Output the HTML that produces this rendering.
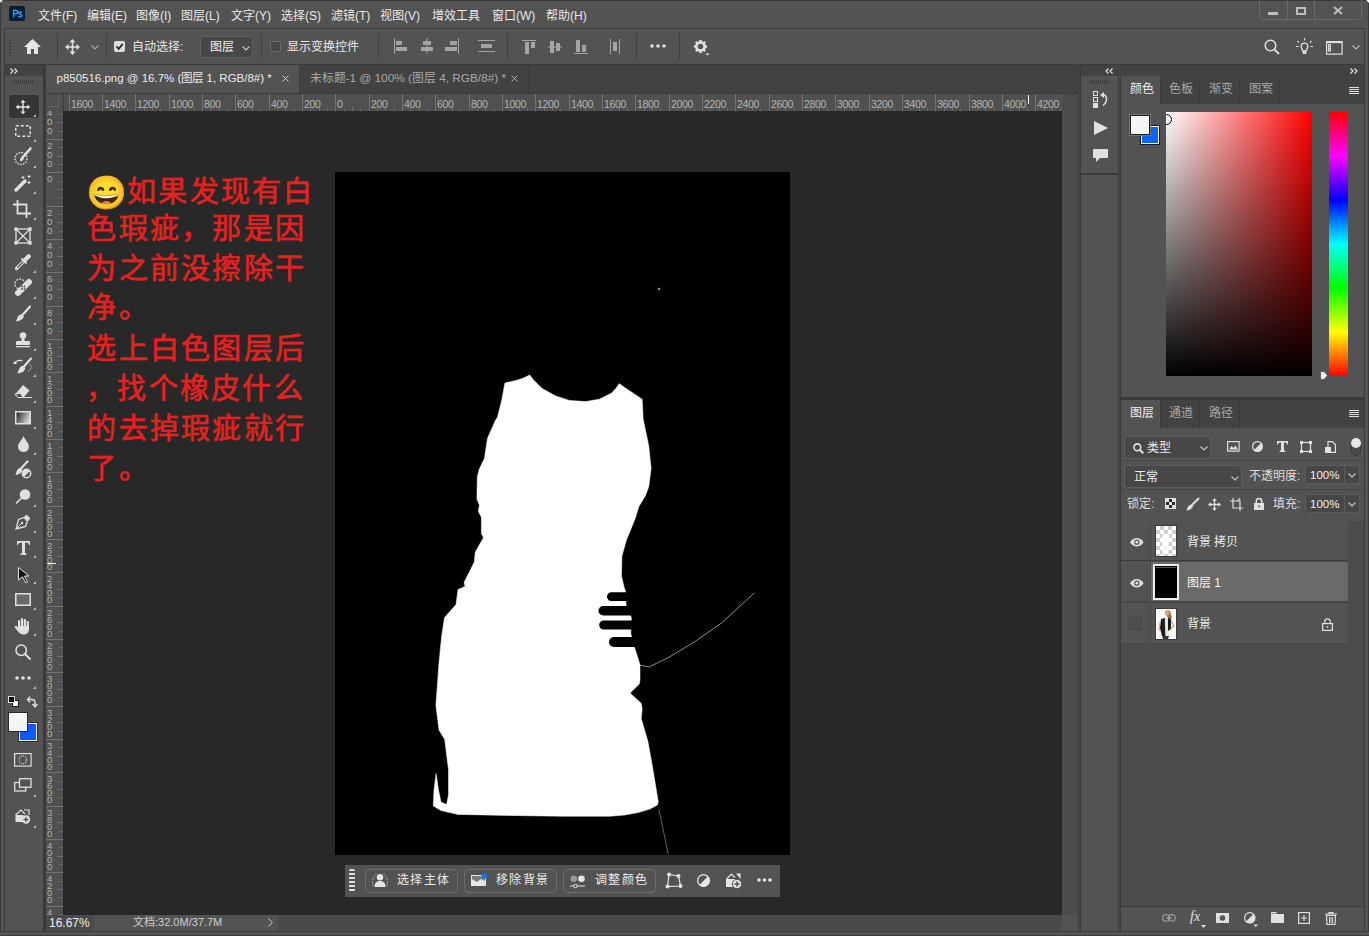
<!DOCTYPE html>
<html lang="zh-CN"><head><meta charset="utf-8">
<style>
*{box-sizing:border-box;margin:0;padding:0}
html,body{width:1369px;height:936px;overflow:hidden;background:#535353;font-family:"Liberation Sans",sans-serif;color:#d6d6d6;font-size:12px}
.a{position:absolute}
.t{position:absolute;white-space:nowrap;line-height:1}
svg{position:absolute;overflow:visible}
.sep{position:absolute;width:1px;background:#3f3f3f}
</style><style>
.rl{font-size:10.5px;color:#b4b4b4;letter-spacing:-0.3px}
.rt{font-size:29px;font-weight:500;color:#e8211f;-webkit-text-stroke:0.6px #e8211f;letter-spacing:2.3px}
.ct{font-size:12px;color:#ececec;letter-spacing:1.4px}
.pt{font-size:12px}
.nt{font-size:11.5px;color:#f0f0f0}
</style></head><body>
<!-- window frame -->
<div class="a" style="left:0;top:0;width:1369px;height:936px;background:#535353;border:1px solid #3a3a3a"></div>
<div class="a" style="left:0;top:931px;width:1369px;height:4px;background:#535353;border-top:1px solid #3a3a3a"></div>
<svg style="left:0;top:0" width="3" height="3"><path d="M0 0H3L0 3Z" fill="#fff"/></svg><svg style="left:1366px;top:0" width="3" height="3"><path d="M0 0H3V3Z" fill="#fff"/></svg>
<!-- menubar -->
<div class="a" style="left:9px;top:6px;width:16px;height:15px;background:#001e36;border-radius:2px"></div>
<svg style="left:0;top:0" width="30" height="30" fill="none" stroke="#31a8ff"><path d="M13.6 17.2V10.4H15.7C17 10.4 17.7 11.1 17.7 12.1C17.7 13.2 17 13.9 15.7 13.9H13.6" stroke-width="1.3"/><path d="M21.8 12.5C21.4 12.2 20.9 12 20.3 12C19.4 12 18.8 12.5 18.8 13.1C18.8 14.6 22 14 22 15.6C22 16.4 21.2 16.9 20.2 16.9C19.5 16.9 18.8 16.6 18.4 16.2" stroke-width="1.3"/></svg>
<div class="a" style="left:38px;top:9.5px;font-size:12px;color:#e8e8e8">
<span class="t" style="left:0">文件(F)</span><span class="t" style="left:49px">编辑(E)</span><span class="t" style="left:98px">图像(I)</span><span class="t" style="left:143px">图层(L)</span><span class="t" style="left:193px">文字(Y)</span><span class="t" style="left:243px">选择(S)</span><span class="t" style="left:293px">滤镜(T)</span><span class="t" style="left:342px">视图(V)</span><span class="t" style="left:394px">增效工具</span><span class="t" style="left:454px">窗口(W)</span><span class="t" style="left:508px">帮助(H)</span>
</div>
<!-- window controls -->
<div class="a" style="left:1259px;top:-2px;width:103px;height:22px;border:1px solid #686868;border-radius:0 0 4px 4px"></div>
<div class="a" style="left:1287px;top:0;width:1px;height:19px;background:#686868"></div>
<div class="a" style="left:1314px;top:0;width:1px;height:19px;background:#686868"></div>
<div class="a" style="left:1268px;top:12px;width:10px;height:3px;background:#bdbdbd"></div>
<div class="a" style="left:1296px;top:7px;width:10px;height:8px;border:2px solid #bdbdbd"></div>
<svg style="left:1333px;top:6px" width="10" height="9"><path d="M1 1L9 8M9 1L1 8" stroke="#bdbdbd" stroke-width="2"/></svg>

<!-- options bar -->
<div class="a" style="left:4px;top:28px;width:1361px;height:37px;background:#535353;border:1px solid #3a3a3a;border-bottom:none"></div>
<div class="a" style="left:9px;top:37px;width:2px;height:19px;background:repeating-linear-gradient(#3a3a3a 0 1px,transparent 1px 3px)"></div>
<svg style="left:24px;top:39px" width="17" height="16"><path d="M8.5 0L0 8H3V15H7V10H10V15H14V8H17Z" fill="#e6e6e6"/></svg>
<div class="sep" style="left:57px;top:34px;height:25px"></div>
<svg style="left:65px;top:39px" width="15" height="16"><path d="M7.5 1V15M1 8H14" stroke="#e0e0e0" stroke-width="1.6"/><path d="M7.5 0L4.5 3.5H10.5ZM7.5 16L4.5 12.5H10.5ZM0 8L3.5 5V11ZM15 8L11.5 5V11Z" fill="#e0e0e0"/></svg>
<svg style="left:91px;top:45px" width="8" height="5"><path d="M0.5 0.5L4 4L7.5 0.5" stroke="#a8a8a8" stroke-width="1.2" fill="none"/></svg>
<div class="sep" style="left:106px;top:34px;height:25px"></div>
<div class="a" style="left:114px;top:41px;width:11px;height:11px;background:#dcdcdc;border-radius:2px"></div>
<svg style="left:114px;top:41px" width="11" height="11"><path d="M2.5 5.5L4.7 7.8L8.7 3" stroke="#222" stroke-width="1.8" fill="none"/></svg>
<div class="t" style="left:132px;top:41px;font-size:12px;color:#e8e8e8">自动选择:</div>
<div class="a" style="left:200px;top:36px;width:53px;height:22px;background:#474747;border:1px solid #5f5f5f;border-radius:3px"></div>
<div class="t" style="left:210px;top:41px;font-size:12px;color:#f0f0f0">图层</div>
<svg style="left:242px;top:46px" width="8" height="5"><path d="M0.5 0.5L4 4L7.5 0.5" stroke="#c8c8c8" stroke-width="1.2" fill="none"/></svg>
<div class="sep" style="left:261px;top:34px;height:25px"></div>
<div class="a" style="left:270px;top:41px;width:11px;height:11px;background:#474747;border:1px solid #6e6e6e;border-radius:2px"></div>
<div class="t" style="left:287px;top:41px;font-size:12px;color:#e8e8e8">显示变换控件</div>
<div class="sep" style="left:378px;top:34px;height:25px"></div>
<!-- align icons -->
<svg style="left:394px;top:38px" width="14" height="16" fill="#a4a4a4"><rect x="0" y="0" width="1" height="16"/><rect x="2" y="3" width="6" height="4"/><rect x="2" y="9" width="11" height="4"/></svg>
<svg style="left:421px;top:38px" width="12" height="16" fill="#a4a4a4"><rect x="5.5" y="0" width="1" height="16"/><rect x="2" y="3" width="8" height="4"/><rect x="0" y="9" width="12" height="4"/></svg>
<svg style="left:445px;top:38px" width="14" height="16" fill="#a4a4a4"><rect x="13" y="0" width="1" height="16"/><rect x="5" y="3" width="7" height="4"/><rect x="0" y="9" width="12" height="4"/></svg>
<svg style="left:478px;top:38px" width="17" height="16" fill="#a4a4a4"><rect x="0" y="2" width="17" height="1"/><rect x="3" y="6" width="11" height="4"/><rect x="0" y="13" width="17" height="1"/></svg>
<div class="sep" style="left:507px;top:34px;height:25px"></div>
<svg style="left:522px;top:40px" width="14" height="14" fill="#a4a4a4"><rect x="0" y="0" width="14" height="1"/><rect x="3" y="2" width="4" height="12"/><rect x="9" y="2" width="4" height="6"/></svg>
<svg style="left:548px;top:40px" width="14" height="14" fill="#a4a4a4"><rect x="0" y="6.5" width="14" height="1"/><rect x="2" y="1" width="4" height="12"/><rect x="8" y="3" width="4" height="8"/></svg>
<svg style="left:574px;top:40px" width="14" height="14" fill="#a4a4a4"><rect x="0" y="13" width="14" height="1"/><rect x="2" y="0" width="4" height="12"/><rect x="8" y="5" width="4" height="7"/></svg>
<svg style="left:610px;top:39px" width="10" height="15" fill="#a4a4a4"><rect x="0" y="0" width="1" height="15"/><rect x="3" y="3" width="4" height="9"/><rect x="9" y="0" width="1" height="15"/></svg>
<div class="sep" style="left:636px;top:34px;height:25px"></div>
<svg style="left:650px;top:44px" width="16" height="4" fill="#e0e0e0"><circle cx="2" cy="2" r="1.8"/><circle cx="8" cy="2" r="1.8"/><circle cx="14" cy="2" r="1.8"/></svg>
<div class="sep" style="left:679px;top:34px;height:25px"></div>
<svg style="left:694px;top:40px" width="16" height="16"><g fill="#e0e0e0"><rect x="5.3" y="-0.1" width="2.4" height="3" transform="rotate(0 6.5 6.5)"/><rect x="5.3" y="-0.1" width="2.4" height="3" transform="rotate(45 6.5 6.5)"/><rect x="5.3" y="-0.1" width="2.4" height="3" transform="rotate(90 6.5 6.5)"/><rect x="5.3" y="-0.1" width="2.4" height="3" transform="rotate(135 6.5 6.5)"/><rect x="5.3" y="-0.1" width="2.4" height="3" transform="rotate(180 6.5 6.5)"/><rect x="5.3" y="-0.1" width="2.4" height="3" transform="rotate(225 6.5 6.5)"/><rect x="5.3" y="-0.1" width="2.4" height="3" transform="rotate(270 6.5 6.5)"/><rect x="5.3" y="-0.1" width="2.4" height="3" transform="rotate(315 6.5 6.5)"/></g><circle cx="6.5" cy="6.5" r="4.1" fill="none" stroke="#e0e0e0" stroke-width="2.6"/><path d="M11.5 13.6H15.5L13.5 15.6Z" fill="#f0f0f0"/></svg>
<!-- right side options icons -->
<svg style="left:1264px;top:39px" width="16" height="16"><circle cx="6.5" cy="6.5" r="5.3" fill="none" stroke="#e0e0e0" stroke-width="1.5"/><path d="M10.3 10.3L15 15" stroke="#e0e0e0" stroke-width="1.9"/></svg>
<svg style="left:1296px;top:38px" width="17" height="17" fill="none" stroke="#e0e0e0" stroke-width="1.2"><path d="M8.5 0V2.5M1.5 3L3.2 4.7M15.5 3L13.8 4.7M0 8.5H2.5M14.5 8.5H17"/><path d="M5.2 8.5A3.3 3.3 0 1 1 11.8 8.5C11.8 10.5 10.3 11.2 10.3 13H6.7C6.7 11.2 5.2 10.5 5.2 8.5Z" stroke-width="1.3"/><rect x="6.7" y="13.5" width="3.6" height="2.5" fill="#e0e0e0" stroke="none"/></svg>
<svg style="left:1326px;top:41px" width="17" height="14"><rect x="0.6" y="0.6" width="15.5" height="12.5" fill="none" stroke="#e0e0e0" stroke-width="1.2"/><rect x="0.6" y="0.6" width="15.5" height="1.5" fill="#e0e0e0"/><rect x="2" y="3" width="3" height="7.5" fill="#e0e0e0"/><rect x="3" y="4" width="1" height="1" fill="#535353"/><rect x="3" y="6.2" width="1" height="1" fill="#535353"/><rect x="3" y="8.4" width="1" height="1" fill="#535353"/></svg>
<svg style="left:1352px;top:45px" width="8" height="5"><path d="M0.5 0.5L4 4L7.5 0.5" stroke="#bdbdbd" stroke-width="1.1" fill="none"/></svg>
<!-- left tools panel -->
<div class="a" style="left:4px;top:64px;width:41px;height:868px;background:#3a3a3a"></div>
<div class="a" style="left:5px;top:65px;width:38px;height:11px;background:#424242"></div>
<svg style="left:10px;top:68px" width="8" height="6" fill="none" stroke="#e6e6e6" stroke-width="1.2"><path d="M0.5 0.5L3 3L0.5 5.5M4.5 0.5L7 3L4.5 5.5"/></svg>
<div class="a" style="left:5px;top:76px;width:38px;height:855px;background:#535353"></div>
<div class="a" style="left:14px;top:80px;width:20px;height:4px;background:repeating-linear-gradient(90deg,#3c3c3c 0 1px,transparent 1px 2px)"></div>
<div class="a" style="left:8px;top:93.5px;width:31.5px;height:25px;background:#353535;border:1px solid #5a5a5a;border-radius:3.5px"></div>

<svg style="left:15px;top:99px" width="16" height="16"><path d="M8 2.5V13.5M2.5 8H13.5" stroke="#e6e6e6" stroke-width="1.4"/><path d="M8 0.8L5.4 3.6H10.6ZM8 15.2L5.4 12.4H10.6ZM0.8 8L3.6 5.4V10.6ZM15.2 8L12.4 5.4V10.6Z" fill="#e6e6e6"/></svg><svg style="left:33px;top:114px" width="3" height="3"><path d="M3 0V3H0Z" fill="#b8b8b8"/></svg>
<svg style="left:15px;top:125px" width="16" height="12"><rect x="0.75" y="0.75" width="14.5" height="10.5" fill="none" stroke="#e0e0e0" stroke-width="1.5" stroke-dasharray="3 2"/></svg><svg style="left:33px;top:139px" width="3" height="3"><path d="M3 0V3H0Z" fill="#b8b8b8"/></svg>
<svg style="left:14px;top:148px" width="18" height="18"><circle cx="7" cy="10.5" r="6" fill="none" stroke="#e0e0e0" stroke-width="1.4" stroke-dasharray="1.6 1.2"/><path d="M16.5 0.5L8.5 9.5" stroke="#e0e0e0" stroke-width="2.6" stroke-linecap="round"/><path d="M8.8 9.2C6.8 9 5.5 10.5 6.2 13.5C8 13 9.8 12 9.8 10.3Z" fill="#e0e0e0"/></svg><svg style="left:33px;top:165px" width="3" height="3"><path d="M3 0V3H0Z" fill="#b8b8b8"/></svg>
<svg style="left:14px;top:174px" width="18" height="18"><path d="M2 16L11 7" stroke="#e0e0e0" stroke-width="3.4" stroke-linecap="round"/><path d="M9 2V5M7.5 3.5H10.5M15 1V4M13.5 2.5H16.5M15 7V10M13.5 8.5H16.5" stroke="#e0e0e0" stroke-width="1.1"/></svg><svg style="left:33px;top:191px" width="3" height="3"><path d="M3 0V3H0Z" fill="#b8b8b8"/></svg>
<svg style="left:13px;top:200px" width="18" height="18" fill="none" stroke="#e0e0e0" stroke-width="1.8"><path d="M4.5 0V13.5H18M0 4.5H13.5V18"/></svg><svg style="left:33px;top:217px" width="3" height="3"><path d="M3 0V3H0Z" fill="#b8b8b8"/></svg>
<svg style="left:15px;top:228px" width="16" height="16" fill="none" stroke="#e0e0e0" stroke-width="1.3"><rect x="1" y="1" width="14" height="14"/><path d="M1 1L15 15M15 1L1 15"/><rect x="0" y="0" width="2" height="2" fill="#e0e0e0"/><rect x="14" y="0" width="2" height="2" fill="#e0e0e0"/><rect x="0" y="14" width="2" height="2" fill="#e0e0e0"/><rect x="14" y="14" width="2" height="2" fill="#e0e0e0"/></svg>
<svg style="left:15px;top:254px" width="16" height="16"><path d="M1.5 14.5L9 7" stroke="#e0e0e0" stroke-width="3.2" stroke-linecap="round"/><path d="M2.5 13.5L8.5 7.5" stroke="#535353" stroke-width="1.2"/><path d="M8 5L11 8L16 3C16 0 13 0 13 0Z" fill="#e0e0e0"/><path d="M6.5 4.5L11.5 9.5" stroke="#e0e0e0" stroke-width="1.8"/></svg><svg style="left:33px;top:270px" width="3" height="3"><path d="M3 0V3H0Z" fill="#b8b8b8"/></svg>
<svg style="left:14px;top:278px" width="18" height="18"><circle cx="6" cy="6" r="5" fill="none" stroke="#e0e0e0" stroke-width="1.3" stroke-dasharray="1.8 1.4"/><path d="M4 15L15 4" stroke="#e0e0e0" stroke-width="6" stroke-linecap="round"/><circle cx="8" cy="11" r="0.9" fill="#535353"/><circle cx="10.5" cy="8.5" r="0.9" fill="#535353"/><circle cx="8" cy="8.5" r="0.9" fill="#535353"/><circle cx="10.5" cy="11" r="0.9" fill="#535353"/></svg><svg style="left:33px;top:296px" width="3" height="3"><path d="M3 0V3H0Z" fill="#b8b8b8"/></svg>
<svg style="left:15px;top:306px" width="16" height="16"><path d="M15 0.5L7.5 9" stroke="#e0e0e0" stroke-width="2.2" stroke-linecap="round"/><path d="M7 8.5C4 8 2.5 10.5 1 15.5C4.5 15 8.5 13.5 8.8 10.3Z" fill="#e0e0e0"/></svg><svg style="left:33px;top:322px" width="3" height="3"><path d="M3 0V3H0Z" fill="#b8b8b8"/></svg>
<svg style="left:15px;top:332px" width="16" height="16" fill="#e0e0e0"><circle cx="8" cy="3.5" r="3.3"/><rect x="6.5" y="5" width="3" height="4"/><rect x="1" y="9" width="14" height="4" rx="1"/><rect x="1" y="14" width="14" height="1.3"/></svg><svg style="left:33px;top:348px" width="3" height="3"><path d="M3 0V3H0Z" fill="#b8b8b8"/></svg>
<svg style="left:13px;top:358px" width="20" height="16"><path d="M18 0.5L11 8.5" stroke="#e0e0e0" stroke-width="2.2" stroke-linecap="round"/><path d="M10.5 8C7.5 7.5 6 10 4.5 15.5C8 15 12 13.5 12.3 10Z" fill="#e0e0e0"/><path d="M1.5 5.5C3 2.5 7 1.5 9.5 3" fill="none" stroke="#e0e0e0" stroke-width="1.2"/><path d="M0 6L4 6L2 3Z" fill="#e0e0e0"/><path d="M17 6C19 8.5 18 12 15 13.5" fill="none" stroke="#e0e0e0" stroke-width="1" stroke-dasharray="1 1"/></svg><svg style="left:33px;top:374px" width="3" height="3"><path d="M3 0V3H0Z" fill="#b8b8b8"/></svg>
<svg style="left:14px;top:384px" width="18" height="16"><path d="M9 1L15.5 6.5L9.5 13.5H4L1 10.5Z" fill="#e0e0e0"/><path d="M1 10.5L4 13.5H9.5L6 9Z" fill="#535353" stroke="#e0e0e0" stroke-width="1"/><path d="M9.5 13.5H18" stroke="#e0e0e0" stroke-width="1"/></svg><svg style="left:33px;top:400px" width="3" height="3"><path d="M3 0V3H0Z" fill="#b8b8b8"/></svg>
<svg style="left:15px;top:411px" width="16" height="14"><defs><linearGradient id="gr" x1="0" y1="0" x2="1" y2="0.4"><stop offset="0" stop-color="#1a1a1a"/><stop offset="1" stop-color="#d0d0d0"/></linearGradient></defs><rect x="0.75" y="0.75" width="14.5" height="12" fill="url(#gr)" stroke="#e0e0e0" stroke-width="1.5"/></svg><svg style="left:33px;top:426px" width="3" height="3"><path d="M3 0V3H0Z" fill="#b8b8b8"/></svg>
<svg style="left:18px;top:436px" width="11" height="16"><path d="M5.5 0C4 4 0 7 0 10.5A5.5 5.5 0 0 0 11 10.5C11 7 7 4 5.5 0Z" fill="#e0e0e0"/></svg><svg style="left:33px;top:452px" width="3" height="3"><path d="M3 0V3H0Z" fill="#b8b8b8"/></svg>
<svg style="left:15px;top:461px" width="16" height="18"><path d="M12.5 0.5L6 7.5" stroke="#e0e0e0" stroke-width="2.2" stroke-linecap="round"/><path d="M5.5 7C3 7 1.5 9.5 0.5 14C3.5 13.5 7 12 7.2 9Z" fill="#e0e0e0"/><circle cx="11.5" cy="12.5" r="4.2" fill="#535353" stroke="#e0e0e0" stroke-width="1.4"/><path d="M8.5 15.5L14.5 9.5" stroke="#e0e0e0" stroke-width="1.3"/><path d="M11.5 8.3A4.2 4.2 0 0 1 14.5 9.5L8.5 15.5A4.2 4.2 0 0 1 11.5 8.3Z" fill="#e0e0e0"/></svg>
<svg style="left:15px;top:489px" width="16" height="16"><circle cx="10" cy="5.5" r="5.3" fill="#e0e0e0"/><path d="M6.5 9L1 14.5" stroke="#e0e0e0" stroke-width="1.6"/></svg><svg style="left:33px;top:504px" width="3" height="3"><path d="M3 0V3H0Z" fill="#b8b8b8"/></svg>
<svg style="left:15px;top:514px" width="16" height="16"><path d="M11.5 0.5L15.5 4.5L13 7L9 3Z" fill="#e0e0e0"/><path d="M9 3.5L12.5 7L10.5 12.5L1 15L3.5 5.5Z" fill="none" stroke="#e0e0e0" stroke-width="1.3"/><path d="M1 15L6.5 9.5" stroke="#e0e0e0" stroke-width="1"/><circle cx="7" cy="9" r="1.2" fill="#e0e0e0"/></svg><svg style="left:33px;top:530px" width="3" height="3"><path d="M3 0V3H0Z" fill="#b8b8b8"/></svg>
<svg style="left:17px;top:541px" width="13" height="14" fill="#e0e0e0"><path d="M0 0H13V4H12C11.5 2 11 1.8 8 1.8V12.2L9.5 12.5V14H3.5V12.5L5 12.2V1.8C2 1.8 1.5 2 1 4H0Z"/></svg><svg style="left:33px;top:555px" width="3" height="3"><path d="M3 0V3H0Z" fill="#b8b8b8"/></svg>
<svg style="left:18px;top:567px" width="12" height="16"><path d="M0.5 0.5L11 9H6.5L9.5 15L7.5 15.8L4.5 9.8L0.5 13Z" fill="#111" stroke="#e0e0e0" stroke-width="1"/></svg><svg style="left:33px;top:581px" width="3" height="3"><path d="M3 0V3H0Z" fill="#b8b8b8"/></svg>
<svg style="left:15px;top:593px" width="16" height="13"><rect x="0.75" y="0.75" width="14.5" height="11.5" fill="#6a6a6a" stroke="#e0e0e0" stroke-width="1.5"/></svg><svg style="left:33px;top:607px" width="3" height="3"><path d="M3 0V3H0Z" fill="#b8b8b8"/></svg>
<svg style="left:14px;top:618px" width="17" height="17" fill="#e0e0e0"><rect x="4" y="2" width="2.2" height="9" rx="1.1"/><rect x="6.9" y="0" width="2.2" height="10" rx="1.1"/><rect x="9.8" y="1" width="2.2" height="10" rx="1.1"/><rect x="12.7" y="3" width="2.2" height="9" rx="1.1"/><path d="M4 8H15V11C15 14.5 13 16.5 9.5 16.5C7 16.5 5.5 15.5 4 13.5L0.5 9C1 8 2 7.8 3 8.5L4 9.5Z"/></svg><svg style="left:33px;top:633px" width="3" height="3"><path d="M3 0V3H0Z" fill="#b8b8b8"/></svg>
<svg style="left:15px;top:644px" width="16" height="16"><circle cx="6.2" cy="6.2" r="5.2" fill="none" stroke="#e0e0e0" stroke-width="1.5"/><path d="M10 10L15.5 15.5" stroke="#e0e0e0" stroke-width="2"/></svg>
<svg style="left:15px;top:676px" width="16" height="4" fill="#e0e0e0"><circle cx="2" cy="2" r="1.8"/><circle cx="8" cy="2" r="1.8"/><circle cx="14" cy="2" r="1.8"/></svg><svg style="left:33px;top:686px" width="3" height="3"><path d="M3 0V3H0Z" fill="#b8b8b8"/></svg>
<div class="a" style="left:12px;top:700px;width:7px;height:7px;background:#fff;border:1px solid #1a1a1a"></div><div class="a" style="left:8px;top:696px;width:7px;height:7px;background:#000;border:1px solid #ddd"></div>
<svg style="left:27px;top:696px" width="11" height="12" fill="none" stroke="#e0e0e0" stroke-width="1.4"><path d="M1 3.5H5C7.5 3.5 8 4.5 8 7V10"/><path d="M3 0.8L0.5 3.5L3 6.2M5.5 8L8 10.8L10.5 8" /></svg>
<div class="a" style="left:18px;top:722px;width:20px;height:20px;background:#0d5bff;border:1px solid #2a2a2a;box-shadow:inset 0 0 0 1px #f0f0f0"></div><div class="a" style="left:8px;top:712px;width:20px;height:20px;background:#f5f5f5;border:1px solid #2a2a2a"></div>
<svg style="left:14px;top:753px" width="18" height="14"><rect x="0.6" y="0.6" width="16.5" height="12.5" fill="none" stroke="#e0e0e0" stroke-width="1.2"/><circle cx="8.8" cy="6.8" r="3.8" fill="none" stroke="#e0e0e0" stroke-width="1.2" stroke-dasharray="1 1.2"/></svg>
<svg style="left:14px;top:778px" width="18" height="14" fill="#535353" stroke="#e0e0e0" stroke-width="1.3"><rect x="0.7" y="4.5" width="11" height="8.5"/><rect x="5.5" y="0.7" width="11.5" height="8.5"/></svg><svg style="left:33px;top:794px" width="3" height="3"><path d="M3 0V3H0Z" fill="#b8b8b8"/></svg>
<svg style="left:15px;top:809px" width="16" height="15"><path d="M0.5 6L6 1L10 5" fill="none" stroke="#e0e0e0" stroke-width="1.2"/><rect x="0.5" y="6" width="8" height="7" fill="#e0e0e0"/><path d="M9 1H14V6" fill="none" stroke="#e0e0e0" stroke-width="1.2"/><circle cx="11" cy="10.5" r="4.2" fill="#e0e0e0"/><path d="M11 8V13M8.5 10.5H13.5" stroke="#535353" stroke-width="1.3"/></svg><svg style="left:33px;top:825px" width="3" height="3"><path d="M3 0V3H0Z" fill="#b8b8b8"/></svg><div class="a" style="left:45px;top:64px;width:1034px;height:868px;background:#3a3a3a"></div>
<div class="a" style="left:46px;top:65px;width:1032px;height:28px;background:#424242"></div>
<div class="a" style="left:46px;top:65px;width:253px;height:28px;background:#535353"></div>
<div class="a" style="left:528px;top:65px;width:1px;height:28px;background:#3a3a3a"></div>
<div class="t" id="tab1" style="left:56.5px;top:73px;font-size:11.5px;color:#ececec">p850516.png @ 16.7% (图层 1, RGB/8#) *</div>
<svg style="left:282px;top:75px" width="7" height="7"><path d="M0.5 0.5L6.5 6.5M6.5 0.5L0.5 6.5" stroke="#cfcfcf" stroke-width="1"/></svg>
<div class="t" id="tab2" style="left:309.5px;top:73px;font-size:11.8px;color:#a9a9a9">未标题-1 @ 100% (图层 4, RGB/8#) *</div>
<svg style="left:511px;top:75px" width="7" height="7"><path d="M0.5 0.5L6.5 6.5M6.5 0.5L0.5 6.5" stroke="#b0b0b0" stroke-width="1"/></svg>
<div class="a" style="left:46px;top:94px;width:1016px;height:17px;background:#505050"></div>
<div class="a" style="left:46px;top:111px;width:17px;height:804px;background:#505050"></div>
<div class="a" style="left:58px;top:94px;width:1px;height:14px;background:repeating-linear-gradient(#747474 0 1px,transparent 1px 2px)"></div>
<div class="a" style="left:46px;top:106px;width:14px;height:1px;background:repeating-linear-gradient(90deg,#747474 0 1px,transparent 1px 2px)"></div>
<div class="a" style="left:63px;top:94px;width:1px;height:17px;background:#3c3c3c"></div>
<svg style="left:0;top:0" width="1369" height="936"><path d="M69.5 94V111 M102.5 94V111 M135.5 94V111 M169.5 94V111 M202.5 94V111 M235.5 94V111 M269.5 94V111 M302.5 94V111 M335.5 94V111 M369.5 94V111 M402.5 94V111 M435.5 94V111 M469.5 94V111 M502.5 94V111 M535.5 94V111 M569.5 94V111 M602.5 94V111 M635.5 94V111 M669.5 94V111 M702.5 94V111 M735.5 94V111 M769.5 94V111 M802.5 94V111 M835.5 94V111 M869.5 94V111 M902.5 94V111 M935.5 94V111 M969.5 94V111 M1002.5 94V111 M1035.5 94V111 M46 139.5H63 M46 172.5H63 M46 206.5H63 M46 239.5H63 M46 272.5H63 M46 306.5H63 M46 339.5H63 M46 372.5H63 M46 406.5H63 M46 439.5H63 M46 472.5H63 M46 506.5H63 M46 539.5H63 M46 572.5H63 M46 606.5H63 M46 639.5H63 M46 672.5H63 M46 706.5H63 M46 739.5H63 M46 772.5H63 M46 806.5H63 M46 839.5H63 M46 872.5H63 M46 906.5H63" stroke="#747474" stroke-width="1"/><path d="M77.5 108V111 M85.5 107V111 M94.5 108V111 M110.5 108V111 M119.5 107V111 M127.5 108V111 M144.5 108V111 M152.5 107V111 M160.5 108V111 M177.5 108V111 M185.5 107V111 M194.5 108V111 M210.5 108V111 M219.5 107V111 M227.5 108V111 M244.5 108V111 M252.5 107V111 M260.5 108V111 M277.5 108V111 M285.5 107V111 M294.5 108V111 M310.5 108V111 M319.5 107V111 M327.5 108V111 M344.5 108V111 M352.5 107V111 M360.5 108V111 M377.5 108V111 M385.5 107V111 M394.5 108V111 M410.5 108V111 M419.5 107V111 M427.5 108V111 M444.5 108V111 M452.5 107V111 M460.5 108V111 M477.5 108V111 M485.5 107V111 M494.5 108V111 M510.5 108V111 M519.5 107V111 M527.5 108V111 M544.5 108V111 M552.5 107V111 M560.5 108V111 M577.5 108V111 M585.5 107V111 M594.5 108V111 M610.5 108V111 M619.5 107V111 M627.5 108V111 M644.5 108V111 M652.5 107V111 M660.5 108V111 M677.5 108V111 M685.5 107V111 M694.5 108V111 M710.5 108V111 M719.5 107V111 M727.5 108V111 M744.5 108V111 M752.5 107V111 M760.5 108V111 M777.5 108V111 M785.5 107V111 M794.5 108V111 M810.5 108V111 M819.5 107V111 M827.5 108V111 M844.5 108V111 M852.5 107V111 M860.5 108V111 M877.5 108V111 M885.5 107V111 M894.5 108V111 M910.5 108V111 M919.5 107V111 M927.5 108V111 M944.5 108V111 M952.5 107V111 M960.5 108V111 M977.5 108V111 M985.5 107V111 M994.5 108V111 M1010.5 108V111 M1019.5 107V111 M1027.5 108V111 M1044.5 108V111 M1052.5 107V111 M1060.5 108V111 M59 114.5H63 M57 122.5H63 M59 131.5H63 M59 147.5H63 M57 156.5H63 M59 164.5H63 M59 181.5H63 M57 189.5H63 M59 197.5H63 M59 214.5H63 M57 222.5H63 M59 231.5H63 M59 247.5H63 M57 256.5H63 M59 264.5H63 M59 281.5H63 M57 289.5H63 M59 297.5H63 M59 314.5H63 M57 322.5H63 M59 331.5H63 M59 347.5H63 M57 356.5H63 M59 364.5H63 M59 381.5H63 M57 389.5H63 M59 397.5H63 M59 414.5H63 M57 422.5H63 M59 431.5H63 M59 447.5H63 M57 456.5H63 M59 464.5H63 M59 481.5H63 M57 489.5H63 M59 497.5H63 M59 514.5H63 M57 522.5H63 M59 531.5H63 M59 547.5H63 M57 556.5H63 M59 564.5H63 M59 581.5H63 M57 589.5H63 M59 597.5H63 M59 614.5H63 M57 622.5H63 M59 631.5H63 M59 647.5H63 M57 656.5H63 M59 664.5H63 M59 681.5H63 M57 689.5H63 M59 697.5H63 M59 714.5H63 M57 722.5H63 M59 731.5H63 M59 747.5H63 M57 756.5H63 M59 764.5H63 M59 781.5H63 M57 789.5H63 M59 797.5H63 M59 814.5H63 M57 822.5H63 M59 831.5H63 M59 847.5H63 M57 856.5H63 M59 864.5H63 M59 881.5H63 M57 889.5H63 M59 897.5H63 M59 914.5H63" stroke="#6c6c6c" stroke-width="1"/></svg>
<div class="t rl" style="left:71px;top:99px">1600</div>
<div class="t rl" style="left:104px;top:99px">1400</div>
<div class="t rl" style="left:137px;top:99px">1200</div>
<div class="t rl" style="left:171px;top:99px">1000</div>
<div class="t rl" style="left:204px;top:99px">800</div>
<div class="t rl" style="left:237px;top:99px">600</div>
<div class="t rl" style="left:271px;top:99px">400</div>
<div class="t rl" style="left:304px;top:99px">200</div>
<div class="t rl" style="left:337px;top:99px">0</div>
<div class="t rl" style="left:371px;top:99px">200</div>
<div class="t rl" style="left:404px;top:99px">400</div>
<div class="t rl" style="left:437px;top:99px">600</div>
<div class="t rl" style="left:471px;top:99px">800</div>
<div class="t rl" style="left:504px;top:99px">1000</div>
<div class="t rl" style="left:537px;top:99px">1200</div>
<div class="t rl" style="left:571px;top:99px">1400</div>
<div class="t rl" style="left:604px;top:99px">1600</div>
<div class="t rl" style="left:637px;top:99px">1800</div>
<div class="t rl" style="left:671px;top:99px">2000</div>
<div class="t rl" style="left:704px;top:99px">2200</div>
<div class="t rl" style="left:737px;top:99px">2400</div>
<div class="t rl" style="left:771px;top:99px">2600</div>
<div class="t rl" style="left:804px;top:99px">2800</div>
<div class="t rl" style="left:837px;top:99px">3000</div>
<div class="t rl" style="left:871px;top:99px">3200</div>
<div class="t rl" style="left:904px;top:99px">3400</div>
<div class="t rl" style="left:937px;top:99px">3600</div>
<div class="t rl" style="left:971px;top:99px">3800</div>
<div class="t rl" style="left:1004px;top:99px">4000</div>
<div class="t rl" style="left:1037px;top:99px">4200</div>
<div class="a" style="left:46px;top:111px;width:17px;height:804px;overflow:hidden"><div class="a" style="left:-46px;top:-111px;width:1369px;height:936px"><div class="t rl" style="left:47px;top:108px;font-size:9.5px;line-height:1">4</div><div class="t rl" style="left:47px;top:117px;font-size:9.5px;line-height:1">0</div><div class="t rl" style="left:47px;top:126px;font-size:9.5px;line-height:1">0</div><div class="t rl" style="left:47px;top:141px;font-size:9.5px;line-height:1">2</div><div class="t rl" style="left:47px;top:150px;font-size:9.5px;line-height:1">0</div><div class="t rl" style="left:47px;top:159px;font-size:9.5px;line-height:1">0</div><div class="t rl" style="left:47px;top:174px;font-size:9.5px;line-height:1">0</div><div class="t rl" style="left:47px;top:208px;font-size:9.5px;line-height:1">2</div><div class="t rl" style="left:47px;top:217px;font-size:9.5px;line-height:1">0</div><div class="t rl" style="left:47px;top:226px;font-size:9.5px;line-height:1">0</div><div class="t rl" style="left:47px;top:241px;font-size:9.5px;line-height:1">4</div><div class="t rl" style="left:47px;top:250px;font-size:9.5px;line-height:1">0</div><div class="t rl" style="left:47px;top:259px;font-size:9.5px;line-height:1">0</div><div class="t rl" style="left:47px;top:274px;font-size:9.5px;line-height:1">6</div><div class="t rl" style="left:47px;top:283px;font-size:9.5px;line-height:1">0</div><div class="t rl" style="left:47px;top:292px;font-size:9.5px;line-height:1">0</div><div class="t rl" style="left:47px;top:308px;font-size:9.5px;line-height:1">8</div><div class="t rl" style="left:47px;top:317px;font-size:9.5px;line-height:1">0</div><div class="t rl" style="left:47px;top:326px;font-size:9.5px;line-height:1">0</div><div class="t rl" style="left:47px;top:341px;font-size:9.5px;line-height:1">1</div><div class="t rl" style="left:47px;top:348px;font-size:9.5px;line-height:1">0</div><div class="t rl" style="left:47px;top:355px;font-size:9.5px;line-height:1">0</div><div class="t rl" style="left:47px;top:362px;font-size:9.5px;line-height:1">0</div><div class="t rl" style="left:47px;top:374px;font-size:9.5px;line-height:1">1</div><div class="t rl" style="left:47px;top:381px;font-size:9.5px;line-height:1">2</div><div class="t rl" style="left:47px;top:388px;font-size:9.5px;line-height:1">0</div><div class="t rl" style="left:47px;top:395px;font-size:9.5px;line-height:1">0</div><div class="t rl" style="left:47px;top:408px;font-size:9.5px;line-height:1">1</div><div class="t rl" style="left:47px;top:415px;font-size:9.5px;line-height:1">4</div><div class="t rl" style="left:47px;top:422px;font-size:9.5px;line-height:1">0</div><div class="t rl" style="left:47px;top:429px;font-size:9.5px;line-height:1">0</div><div class="t rl" style="left:47px;top:441px;font-size:9.5px;line-height:1">1</div><div class="t rl" style="left:47px;top:448px;font-size:9.5px;line-height:1">6</div><div class="t rl" style="left:47px;top:455px;font-size:9.5px;line-height:1">0</div><div class="t rl" style="left:47px;top:462px;font-size:9.5px;line-height:1">0</div><div class="t rl" style="left:47px;top:474px;font-size:9.5px;line-height:1">1</div><div class="t rl" style="left:47px;top:481px;font-size:9.5px;line-height:1">8</div><div class="t rl" style="left:47px;top:488px;font-size:9.5px;line-height:1">0</div><div class="t rl" style="left:47px;top:495px;font-size:9.5px;line-height:1">0</div><div class="t rl" style="left:47px;top:508px;font-size:9.5px;line-height:1">2</div><div class="t rl" style="left:47px;top:515px;font-size:9.5px;line-height:1">0</div><div class="t rl" style="left:47px;top:522px;font-size:9.5px;line-height:1">0</div><div class="t rl" style="left:47px;top:529px;font-size:9.5px;line-height:1">0</div><div class="t rl" style="left:47px;top:541px;font-size:9.5px;line-height:1">2</div><div class="t rl" style="left:47px;top:548px;font-size:9.5px;line-height:1">2</div><div class="t rl" style="left:47px;top:555px;font-size:9.5px;line-height:1">0</div><div class="t rl" style="left:47px;top:562px;font-size:9.5px;line-height:1">0</div><div class="t rl" style="left:47px;top:574px;font-size:9.5px;line-height:1">2</div><div class="t rl" style="left:47px;top:581px;font-size:9.5px;line-height:1">4</div><div class="t rl" style="left:47px;top:588px;font-size:9.5px;line-height:1">0</div><div class="t rl" style="left:47px;top:595px;font-size:9.5px;line-height:1">0</div><div class="t rl" style="left:47px;top:608px;font-size:9.5px;line-height:1">2</div><div class="t rl" style="left:47px;top:615px;font-size:9.5px;line-height:1">6</div><div class="t rl" style="left:47px;top:622px;font-size:9.5px;line-height:1">0</div><div class="t rl" style="left:47px;top:629px;font-size:9.5px;line-height:1">0</div><div class="t rl" style="left:47px;top:641px;font-size:9.5px;line-height:1">2</div><div class="t rl" style="left:47px;top:648px;font-size:9.5px;line-height:1">8</div><div class="t rl" style="left:47px;top:655px;font-size:9.5px;line-height:1">0</div><div class="t rl" style="left:47px;top:662px;font-size:9.5px;line-height:1">0</div><div class="t rl" style="left:47px;top:674px;font-size:9.5px;line-height:1">3</div><div class="t rl" style="left:47px;top:681px;font-size:9.5px;line-height:1">0</div><div class="t rl" style="left:47px;top:688px;font-size:9.5px;line-height:1">0</div><div class="t rl" style="left:47px;top:695px;font-size:9.5px;line-height:1">0</div><div class="t rl" style="left:47px;top:708px;font-size:9.5px;line-height:1">3</div><div class="t rl" style="left:47px;top:715px;font-size:9.5px;line-height:1">2</div><div class="t rl" style="left:47px;top:722px;font-size:9.5px;line-height:1">0</div><div class="t rl" style="left:47px;top:729px;font-size:9.5px;line-height:1">0</div><div class="t rl" style="left:47px;top:741px;font-size:9.5px;line-height:1">3</div><div class="t rl" style="left:47px;top:748px;font-size:9.5px;line-height:1">4</div><div class="t rl" style="left:47px;top:755px;font-size:9.5px;line-height:1">0</div><div class="t rl" style="left:47px;top:762px;font-size:9.5px;line-height:1">0</div><div class="t rl" style="left:47px;top:774px;font-size:9.5px;line-height:1">3</div><div class="t rl" style="left:47px;top:781px;font-size:9.5px;line-height:1">6</div><div class="t rl" style="left:47px;top:788px;font-size:9.5px;line-height:1">0</div><div class="t rl" style="left:47px;top:795px;font-size:9.5px;line-height:1">0</div><div class="t rl" style="left:47px;top:808px;font-size:9.5px;line-height:1">3</div><div class="t rl" style="left:47px;top:815px;font-size:9.5px;line-height:1">8</div><div class="t rl" style="left:47px;top:822px;font-size:9.5px;line-height:1">0</div><div class="t rl" style="left:47px;top:829px;font-size:9.5px;line-height:1">0</div><div class="t rl" style="left:47px;top:841px;font-size:9.5px;line-height:1">4</div><div class="t rl" style="left:47px;top:848px;font-size:9.5px;line-height:1">0</div><div class="t rl" style="left:47px;top:855px;font-size:9.5px;line-height:1">0</div><div class="t rl" style="left:47px;top:862px;font-size:9.5px;line-height:1">0</div><div class="t rl" style="left:47px;top:874px;font-size:9.5px;line-height:1">4</div><div class="t rl" style="left:47px;top:881px;font-size:9.5px;line-height:1">2</div><div class="t rl" style="left:47px;top:888px;font-size:9.5px;line-height:1">0</div><div class="t rl" style="left:47px;top:895px;font-size:9.5px;line-height:1">0</div><div class="t rl" style="left:47px;top:908px;font-size:9.5px;line-height:1">4</div></div></div>
<div class="a" style="left:1028px;top:95px;width:1px;height:9px;background:#f0f0f0"></div><div class="a" style="left:47px;top:563px;width:9px;height:1px;background:#f0f0f0"></div>
<div class="a" style="left:63px;top:111px;width:999px;height:804px;background:#282828"></div>
<div class="a" style="left:1062px;top:94px;width:16px;height:821px;background:#4c4c4c"></div>
<div class="a" style="left:46px;top:915px;width:1016px;height:16px;background:#4a4a4a"></div>
<div class="a" style="left:94px;top:915px;width:184px;height:16px;background:#535353"></div>
<div class="a" style="left:1062px;top:915px;width:16px;height:16px;background:#535353"></div>
<div class="t" style="left:49px;top:917px;font-size:12px;color:#ececec">16.67%</div>
<div class="t" style="left:133px;top:917px;font-size:11px;color:#d0d0d0">文档:32.0M/37.7M</div>
<svg style="left:268px;top:918px" width="5" height="9"><path d="M0.5 0.5L4.3 4.5L0.5 8.5" stroke="#cfcfcf" fill="none" stroke-width="1"/></svg><div class="a" style="left:335px;top:172px;width:455px;height:683px;background:#000"></div>
<svg style="left:335px;top:172px" width="455" height="683" viewBox="0 0 455 683"><path d="M194.8 202.9 L198.5 207.9 L207.2 216.6 L220.8 224.0 L234.5 228.4 L250.7 229.6 L264.3 227.2 L276.7 221.0 L281.7 215.4 L284.2 211.6 L290.4 216.0 L301.6 223.4 L307.2 227.2 L308.2 247.2 L313.8 274.1 L316.1 296.5 L313.8 314.5 L310.5 323.5 L303.8 334.7 L300.4 345.9 L291.4 368.3 L286.9 384.0 L286.5 404.2 L289.2 415.4 L290.5 419.0 L291.0 432.7 L296.4 445.8 L295.8 461.6 L299.7 476.0 L303.6 488.0 L305.0 493.0 L305.0 508.0 L304.3 512.0 L295.7 520.6 L295.8 521.8 L306.2 531.3 L307.2 537.0 L306.2 546.5 L312.9 569.3 L316.7 590.2 L320.5 613.0 L323.3 630.0 L322.4 632.9 L315.0 637.0 L303.4 640.5 L290.0 643.0 L274.9 644.3 L227.4 644.3 L172.4 643.4 L123.0 642.4 L106.0 638.6 L98.3 633.9 L99.0 618.0 L101.1 601.6 L103.5 618.0 L106.0 630.0 L111.6 632.5 L113.5 623.0 L113.5 609.0 L113.5 597.8 L109.7 567.4 L104.0 558.0 L100.9 533.6 L103.8 493.0 L106.6 464.4 L109.5 445.6 L121.0 432.6 L123.0 417.4 L130.1 414.4 L129.1 410.3 L134.2 400.2 L139.3 390.0 L140.3 379.9 L148.4 365.7 L146.4 361.6 L146.4 345.4 L143.3 339.3 L144.4 333.2 L141.9 327.1 L142.3 304.8 L144.4 296.7 L149.4 286.6 L152.5 266.3 L160.6 248.0 L162.5 245.2 L166.8 227.8 L169.9 211.0 L181.0 208.5 L188.5 206.0Z" fill="#fff" stroke="#fff" stroke-width="0.5" stroke-linejoin="round"/><path d="M310 420.20000000000005H276.4A4.40 4.40 0 0 0 276.4 429H310Z" fill="#000"/><path d="M310 434H268.2A4.75 4.75 0 0 0 268.2 443.5H310Z" fill="#000"/><path d="M310 448.5H268.7A4.50 4.50 0 0 0 268.7 457.5H310Z" fill="#000"/><path d="M310 465H279.0A5.00 5.00 0 0 0 279.0 475H310Z" fill="#000"/><path d="M305.0 493.2 L314.0 495.0 L333.9 485.3 L360.0 469.5 L386.5 451.0 L419.3 420.9" fill="none" stroke="#9a9a9a" stroke-width="0.9"/><path d="M323.9 637L333.29999999999995 682.4" stroke="#6a6a6a" stroke-width="0.9"/><circle cx="324" cy="117" r="1.3" fill="#8a8a8a"/></svg>
<div class="t rt" id="rt0" style="left:127px;top:178px">如果发现有白</div>
<div class="t rt" id="rt1" style="left:87.3px;top:214.5px">色瑕疵，那是因</div>
<div class="t rt" id="rt2" style="left:87.3px;top:254.5px">为之前没擦除干</div>
<div class="t rt" id="rt3" style="left:87.3px;top:293.8px">净。</div>
<div class="t rt" id="rt4" style="left:87.3px;top:335px">选上白色图层后</div>
<div class="t rt" id="rt5" style="left:86px;top:375px">，找个橡皮什么</div>
<div class="t rt" id="rt6" style="left:87.3px;top:414.5px">的去掉瑕疵就行</div>
<div class="t rt" id="rt7" style="left:87.3px;top:454.5px">了。</div>
<div class="t" id="emo" style="left:85.5px;top:175.5px;font-size:33px">😄</div>
<div class="a" style="left:345px;top:865px;width:435px;height:32px;background:#535353"></div>
<div class="a" style="left:349px;top:869px;width:6px;height:23px;background:repeating-linear-gradient(#e0e0e0 0 2px,transparent 2px 4px);border-radius:2px"></div>
<div class="a" style="left:365px;top:869px;width:93px;height:24px;border:1px solid #6e6e6e;border-radius:5px"></div>
<div class="a" style="left:464px;top:869px;width:93px;height:24px;border:1px solid #6e6e6e;border-radius:5px"></div>
<div class="a" style="left:563px;top:869px;width:93px;height:24px;border:1px solid #6e6e6e;border-radius:5px"></div>
<div class="t ct" style="left:397px;top:874px">选择主体</div>
<div class="t ct" style="left:496px;top:874px">移除背景</div>
<div class="t ct" style="left:595px;top:874px">调整颜色</div>
<svg style="left:372px;top:873px" width="16" height="14"><circle cx="8" cy="4.3" r="3.2" fill="#e6e6e6"/><path d="M2.5 14C2.5 9.5 5 8 8 8S13.5 9.5 13.5 14Z" fill="#e6e6e6"/><path d="M1 13C0 9 1 3 4.5 1M15 13C16 9 15 3 11.5 1" fill="none" stroke="#e6e6e6" stroke-width="0.8" stroke-dasharray="1 1"/></svg>
<svg style="left:471px;top:873px" width="17" height="14"><rect x="0" y="2" width="15" height="11" fill="#e6e6e6"/><path d="M1 3H14V8L10 6L6 9L1 6Z" fill="#7a7a7a"/><circle cx="13.5" cy="2.8" r="2.8" fill="#1473e6"/></svg>
<svg style="left:570px;top:875px" width="16" height="13"><circle cx="3.8" cy="3.8" r="3.3" fill="#9a9a9a"/><circle cx="11.5" cy="3.8" r="3.3" fill="#e6e6e6"/><path d="M0 11H15" stroke="#e6e6e6" stroke-width="1"/><circle cx="5.5" cy="11" r="1.8" fill="#535353" stroke="#e6e6e6" stroke-width="1"/></svg>
<svg style="left:666px;top:873px" width="16" height="15" fill="none" stroke="#e6e6e6" stroke-width="1.2"><path d="M3 1.5L12.5 3L14.5 13L1.5 13.5Z"/><circle cx="3" cy="1.5" r="1.4" fill="#e6e6e6"/><circle cx="12.5" cy="3" r="1.4" fill="#e6e6e6"/><circle cx="14.5" cy="13" r="1.4" fill="#e6e6e6"/><circle cx="1.5" cy="13.5" r="1.4" fill="#e6e6e6"/></svg>
<svg style="left:697px;top:874px" width="14" height="14"><circle cx="6.5" cy="6.5" r="5.8" fill="none" stroke="#e6e6e6" stroke-width="1.3"/><path d="M11 2.3A5.8 5.8 0 0 1 2.3 11Z" fill="#e6e6e6"/></svg>
<svg style="left:726px;top:873px" width="16" height="16"><path d="M0.5 6L5.5 1L9 4.5" fill="none" stroke="#e6e6e6" stroke-width="1.2"/><rect x="0" y="6" width="9" height="8" fill="#e6e6e6"/><path d="M10 0.5H14.5V6" fill="#e6e6e6"/><circle cx="11" cy="11" r="4.7" fill="#e6e6e6" stroke="#535353" stroke-width="1"/><path d="M11 8.3V13.7M8.3 11H13.7" stroke="#535353" stroke-width="1.4"/></svg>
<svg style="left:757px;top:878px" width="15" height="4" fill="#e6e6e6"><circle cx="2" cy="2" r="1.8"/><circle cx="7.5" cy="2" r="1.8"/><circle cx="13" cy="2" r="1.8"/></svg><div class="a" style="left:1078px;top:64px;width:287px;height:868px;background:#3a3a3a"></div>
<div class="a" style="left:1081px;top:65px;width:283px;height:11px;background:#424242"></div>
<svg style="left:1105px;top:68px" width="8" height="6" fill="none" stroke="#e0e0e0" stroke-width="1.2"><path d="M3.5 0.5L1 3L3.5 5.5M7.5 0.5L5 3L7.5 5.5"/></svg>
<svg style="left:1350px;top:68px" width="8" height="6" fill="none" stroke="#e0e0e0" stroke-width="1.2"><path d="M0.5 0.5L3 3L0.5 5.5M4.5 0.5L7 3L4.5 5.5"/></svg>
<div class="a" style="left:1081px;top:76px;width:37px;height:97px;background:#535353"></div>
<div class="a" style="left:1081px;top:175px;width:37px;height:756px;background:#535353"></div>
<div class="a" style="left:1090px;top:80px;width:19px;height:4px;background:repeating-linear-gradient(90deg,#3c3c3c 0 1px,transparent 1px 2px)"></div>
<svg style="left:1093px;top:91px" width="16" height="18"><rect x="0.5" y="0.5" width="4" height="4" fill="none" stroke="#e0e0e0" stroke-width="1"/><rect x="0.5" y="6.5" width="4" height="4" fill="none" stroke="#e0e0e0" stroke-width="1"/><rect x="0" y="12" width="5" height="5" fill="#e0e0e0"/><path d="M9.5 3.5C14 4 15.5 9.5 10 14.5" fill="none" stroke="#e0e0e0" stroke-width="1.5"/><path d="M7 4L11 1V7Z" fill="#e0e0e0"/></svg>
<svg style="left:1094px;top:121px" width="14" height="14"><path d="M0 0L14 7L0 14Z" fill="#e0e0e0"/></svg>
<svg style="left:1093px;top:149px" width="15" height="14"><path d="M1 0H14Q15 0 15 1V8Q15 9 14 9H7L3 13V9H1Q0 9 0 8V1Q0 0 1 0Z" fill="#e0e0e0"/></svg>
<div class="a" style="left:1121px;top:76px;width:243px;height:321px;background:#535353"></div>
<div class="a" style="left:1160px;top:76px;width:204px;height:28px;background:#424242"></div>
<div class="a" style="left:1199px;top:76px;width:1px;height:28px;background:#3a3a3a"></div>
<div class="a" style="left:1239px;top:76px;width:1px;height:28px;background:#3a3a3a"></div>
<div class="a" style="left:1279px;top:76px;width:1px;height:28px;background:#3a3a3a"></div>
<div class="a" style="left:1160px;top:76px;width:1px;height:28px;background:#3a3a3a"></div>
<div class="a" style="left:1121px;top:103px;width:243px;height:1px;background:transparent"></div>
<div class="t pt" style="left:1130px;top:83px;color:#f0f0f0">颜色</div>
<div class="t pt" style="left:1169px;top:83px;color:#a8a8a8">色板</div>
<div class="t pt" style="left:1209px;top:83px;color:#a8a8a8">渐变</div>
<div class="t pt" style="left:1249px;top:83px;color:#a8a8a8">图案</div>
<svg style="left:1349px;top:87px" width="10" height="7" fill="#e0e0e0"><rect y="0" width="10" height="1"/><rect y="2" width="10" height="1"/><rect y="4" width="10" height="1"/><rect y="6" width="10" height="1"/></svg>
<div class="a" style="left:1140px;top:125px;width:20px;height:20px;background:#0a64ff;border:1px solid #1a1a1a;box-shadow:inset 0 0 0 1px #f4f4f4"></div>
<div class="a" style="left:1129px;top:114px;width:22px;height:22px;background:#f5f5f5;border:1px solid #777;box-shadow:inset 0 0 0 1px #1e1e1e"></div>
<div class="a" style="left:1166px;top:112px;width:146px;height:264px;background:linear-gradient(to bottom,rgba(0,0,0,0),#000),linear-gradient(to right,#fff,#f00)"></div>
<div class="a" style="left:1166px;top:112px;width:10px;height:16px;overflow:hidden"><div class="a" style="left:-5px;top:2px;width:11px;height:11px;border:1.5px solid #000;border-radius:50%"></div></div>
<div class="a" style="left:1329px;top:112px;width:19px;height:264px;background:linear-gradient(to bottom,#f00 0%,#f0f 16.67%,#00f 33.33%,#0ff 50%,#0f0 66.67%,#ff0 83.33%,#f00 100%)"></div>
<svg style="left:1320px;top:371px" width="8" height="9"><path d="M0.5 1.5Q0.5 0.5 1.5 0.5H4L7.5 4.5L4 8.5H1.5Q0.5 8.5 0.5 7.5Z" fill="#f4f4f4" stroke="#333" stroke-width="0.6"/></svg>
<div class="a" style="left:1121px;top:400px;width:243px;height:531px;background:#535353"></div>
<div class="a" style="left:1160px;top:400px;width:204px;height:28px;background:#424242"></div>
<div class="a" style="left:1160px;top:400px;width:1px;height:28px;background:#3a3a3a"></div>
<div class="a" style="left:1199px;top:400px;width:1px;height:28px;background:#3a3a3a"></div>
<div class="a" style="left:1239px;top:400px;width:1px;height:28px;background:#3a3a3a"></div>
<div class="t pt" style="left:1130px;top:407px;color:#f0f0f0">图层</div>
<div class="t pt" style="left:1169px;top:407px;color:#a8a8a8">通道</div>
<div class="t pt" style="left:1209px;top:407px;color:#a8a8a8">路径</div>
<svg style="left:1349px;top:410px" width="10" height="7" fill="#e0e0e0"><rect y="0" width="10" height="1"/><rect y="2" width="10" height="1"/><rect y="4" width="10" height="1"/><rect y="6" width="10" height="1"/></svg>
<div class="a" style="left:1124px;top:436px;width:87px;height:23px;background:#474747;border:1px solid #5c5c5c;border-radius:3px"></div>
<svg style="left:1133px;top:443px" width="11" height="11"><circle cx="4.3" cy="4.3" r="3.4" fill="none" stroke="#e0e0e0" stroke-width="1.6"/><path d="M6.8 6.8L10.3 10.3" stroke="#e0e0e0" stroke-width="2"/></svg>
<div class="t pt" style="left:1147px;top:442px;color:#ececec">类型</div>
<svg style="left:1200px;top:446px" width="8" height="5"><path d="M0.5 0.5L4 4L7.5 0.5" stroke="#c8c8c8" stroke-width="1.1" fill="none"/></svg>
<svg style="left:1227px;top:441px" width="13" height="11"><rect x="0.6" y="0.6" width="11.5" height="9.5" fill="none" stroke="#e0e0e0" stroke-width="1.2"/><path d="M2 8.5L4.5 5L6.5 7L8.5 4.5L11 8.5Z" fill="#e0e0e0"/></svg>
<svg style="left:1252px;top:441px" width="12" height="12"><circle cx="5.5" cy="5.5" r="4.9" fill="none" stroke="#e0e0e0" stroke-width="1.2"/><path d="M9 2A4.9 4.9 0 0 1 2 9Z" fill="#e0e0e0"/></svg>
<svg style="left:1277px;top:441px" width="11" height="11" fill="#e0e0e0"><path d="M0 0H11V3.5H10C9.7 2 9.3 1.6 7 1.6V9.2L8.3 9.5V11H2.7V9.5L4 9.2V1.6C1.7 1.6 1.3 2 1 3.5H0Z"/></svg>
<svg style="left:1300px;top:441px" width="12" height="12" fill="#e0e0e0"><rect x="1.5" y="1.5" width="9" height="9" fill="none" stroke="#e0e0e0" stroke-width="1.2"/><rect x="0" y="0" width="3" height="3"/><rect x="9" y="0" width="3" height="3"/><rect x="0" y="9" width="3" height="3"/><rect x="9" y="9" width="3" height="3"/></svg>
<svg style="left:1325px;top:441px" width="11" height="12"><path d="M3 0.6H7.5L10.4 3.5V11.4H3Z" fill="none" stroke="#e0e0e0" stroke-width="1.2"/><rect x="0" y="6" width="6" height="6" fill="#e0e0e0"/></svg>
<div class="a" style="left:1351px;top:438px;width:10px;height:18px;border:1px solid #3a3a3a;border-radius:5px;background:#4a4a4a"></div>
<div class="a" style="left:1351px;top:438px;width:10px;height:10px;border-radius:50%;background:#e8e8e8"></div>
<div class="a" style="left:1121px;top:460px;width:243px;height:1px;background:#474747"></div>
<div class="a" style="left:1124px;top:465px;width:118px;height:23px;background:#474747;border:1px solid #5c5c5c;border-radius:3px"></div>
<div class="t pt" style="left:1134px;top:471px;color:#ececec">正常</div>
<svg style="left:1231px;top:476px" width="8" height="5"><path d="M0.5 0.5L4 4L7.5 0.5" stroke="#c8c8c8" stroke-width="1.1" fill="none"/></svg>
<div class="t pt" style="left:1249px;top:470px;color:#dcdcdc">不透明度:</div>
<div class="a" style="left:1305px;top:465px;width:55px;height:19px;background:#474747;border:1px solid #5c5c5c;border-radius:3px"></div>
<div class="a" style="left:1344px;top:466px;width:1px;height:17px;background:#5c5c5c"></div>
<div class="t nt" style="left:1310px;top:470px">100%</div>
<svg style="left:1348px;top:473px" width="8" height="5"><path d="M0.5 0.5L4 4L7.5 0.5" stroke="#c8c8c8" stroke-width="1.1" fill="none"/></svg>
<div class="a" style="left:1121px;top:489px;width:243px;height:1px;background:#474747"></div>
<div class="t pt" style="left:1127px;top:498px;color:#dcdcdc">锁定:</div>
<svg style="left:1165px;top:498px" width="11" height="11"><rect x="0" y="0" width="11" height="11" fill="#e0e0e0"/><path d="M4 1H7V4H4ZM1 4H4V7H1ZM7 4H10V7H7ZM4 7H7V10H4Z" fill="#2a2a2a"/></svg>
<svg style="left:1186px;top:498px" width="13" height="13"><path d="M12.5 0.5L6 7" stroke="#e0e0e0" stroke-width="2" stroke-linecap="round"/><path d="M5.5 6.5C3 6.5 1.5 9 0.5 12.5C3.5 12 6.5 11 7 8Z" fill="#e0e0e0"/></svg>
<svg style="left:1208px;top:498px" width="13" height="13"><path d="M6.5 1.5V11.5M1.5 6.5H11.5" stroke="#e0e0e0" stroke-width="1.3"/><path d="M6.5 0L4.3 2.7H8.7ZM6.5 13L4.3 10.3H8.7ZM0 6.5L2.7 4.3V8.7ZM13 6.5L10.3 4.3V8.7Z" fill="#e0e0e0"/></svg>
<svg style="left:1230px;top:498px" width="14" height="13" fill="none" stroke="#e0e0e0" stroke-width="1.2"><path d="M3 0V10H13M0 3H10V13"/><path d="M7.5 3L10 0.5"/></svg>
<svg style="left:1254px;top:498px" width="10" height="12"><path d="M2.3 5V3.3A2.7 2.7 0 0 1 7.7 3.3V5" fill="none" stroke="#e0e0e0" stroke-width="1.5"/><rect x="0" y="5" width="10" height="7" fill="#e0e0e0"/><rect x="4.3" y="7.3" width="1.4" height="2" fill="#535353"/></svg>
<div class="t pt" style="left:1273px;top:498px;color:#dcdcdc">填充:</div>
<div class="a" style="left:1305px;top:494px;width:55px;height:19px;background:#474747;border:1px solid #5c5c5c;border-radius:3px"></div>
<div class="a" style="left:1344px;top:495px;width:1px;height:17px;background:#5c5c5c"></div>
<div class="t nt" style="left:1310px;top:499px">100%</div>
<svg style="left:1348px;top:502px" width="8" height="5"><path d="M0.5 0.5L4 4L7.5 0.5" stroke="#c8c8c8" stroke-width="1.1" fill="none"/></svg>
<div class="a" style="left:1121px;top:521px;width:243px;height:385px;background:#4b4b4b"></div>
<div class="a" style="left:1121px;top:521px;width:227px;height:39px;background:#535353"></div>
<div class="a" style="left:1121px;top:561px;width:29px;height:40px;background:#535353"></div>
<div class="a" style="left:1151px;top:562px;width:197px;height:40px;background:#6a6a6a"></div>
<div class="a" style="left:1121px;top:603px;width:227px;height:40px;background:#535353"></div>
<div class="a" style="left:1150px;top:521px;width:1px;height:122px;background:#474747"></div>
<div class="a" style="left:1121px;top:560px;width:227px;height:1px;background:#3c3c3c"></div>
<div class="a" style="left:1121px;top:601px;width:227px;height:2px;background:#474747"></div>
<div class="a" style="left:1121px;top:643px;width:227px;height:1px;background:#474747"></div>
<svg style="left:1130px;top:538px" width="14" height="9"><path d="M0 4.2C2 1.2 4.5 0 6.8 0S11.6 1.2 13.6 4.2C11.6 7.2 9.1 8.4 6.8 8.4S2 7.2 0 4.2Z" fill="#e0e0e0"/><circle cx="6.8" cy="4.2" r="2.6" fill="#535353"/><circle cx="6.8" cy="4.2" r="1.4" fill="#e0e0e0"/></svg>
<svg style="left:1130px;top:579px" width="14" height="9"><path d="M0 4.2C2 1.2 4.5 0 6.8 0S11.6 1.2 13.6 4.2C11.6 7.2 9.1 8.4 6.8 8.4S2 7.2 0 4.2Z" fill="#e0e0e0"/><circle cx="6.8" cy="4.2" r="2.6" fill="#535353"/><circle cx="6.8" cy="4.2" r="1.4" fill="#e0e0e0"/></svg>
<div class="a" style="left:1129px;top:617px;width:13px;height:13px;border:1px solid #474747;background:#4e4e4e"></div>
<div class="a" style="left:1155px;top:525px;width:22px;height:32px;background-color:#fff;background-image:linear-gradient(45deg,#cdcdcd 25%,transparent 25%,transparent 75%,#cdcdcd 75%),linear-gradient(45deg,#cdcdcd 25%,transparent 25%,transparent 75%,#cdcdcd 75%);background-size:8px 8px;background-position:0 0,4px 4px;border:1px solid #3a3a3a"></div>
<svg style="left:1156px;top:526px" width="20" height="30"><path d="M7 7Q10 9 13 7L14 14L12 20L13 27H6L6 20L5 14Z" fill="#fff" opacity="0.85"/></svg>
<div class="a" style="left:1153px;top:564px;width:26px;height:36px;background:#000;border:2px solid #f0f0f0"></div>
<div class="a" style="left:1156px;top:567px;width:20px;height:1px;background:#555"></div>
<div class="a" style="left:1155px;top:608px;width:22px;height:32px;background:#fafafa;border:1px solid #3a3a3a"></div>
<svg style="left:1155px;top:608px" width="22" height="32"><path d="M10 4Q12 1 15 3L17 10L14 12Z" fill="#9a6a40"/><circle cx="12" cy="5" r="2.4" fill="#d8a880"/><path d="M6 11L10 10L11 28H7L5 20Z" fill="#1a1a1a"/><path d="M10 10H13L13 28H10.5Z" fill="#eeeeea" stroke="#bbb" stroke-width="0.4"/><path d="M13 10L16 11L16 21L13 23Z" fill="#1a1a1a"/><path d="M16 12L19 18L15 22" fill="none" stroke="#d0a080" stroke-width="1.2"/><path d="M5 14L4 22L6 23" fill="none" stroke="#d0a080" stroke-width="1"/><path d="M7 28H14L13 31H8Z" fill="#333"/></svg>
<div class="t pt" style="left:1187px;top:536px;color:#ececec">背景 拷贝</div>
<div class="t pt" style="left:1187px;top:577px;color:#f4f4f4">图层 1</div>
<div class="t pt" style="left:1187px;top:618px;color:#ececec">背景</div>
<svg style="left:1322px;top:618px" width="11" height="13"><path d="M2.8 5.5V3.5A2.7 2.7 0 0 1 8.2 3.5V5.5" fill="none" stroke="#e0e0e0" stroke-width="1.2"/><rect x="0.6" y="5.6" width="9.8" height="6.8" fill="none" stroke="#e0e0e0" stroke-width="1.2"/><rect x="4.8" y="8.2" width="1.4" height="1.6" fill="#e0e0e0"/></svg>
<div class="a" style="left:1121px;top:906px;width:243px;height:1px;background:#3c3c3c"></div>
<div class="a" style="left:1121px;top:907px;width:243px;height:24px;background:#535353"></div>
<svg style="left:1162px;top:914px" width="14" height="8" fill="none" stroke="#9a9a9a" stroke-width="1.2"><rect x="0.6" y="0.6" width="7" height="6.5" rx="3.2"/><rect x="6.2" y="0.6" width="7" height="6.5" rx="3.2"/><path d="M4 3.9H10"/></svg>
<div class="t" style="left:1190px;top:910px;font-size:14px;font-style:italic;color:#e0e0e0;font-family:'Liberation Serif',serif">fx</div>
<svg style="left:1201px;top:925px" width="5" height="3"><path d="M0 0H5L2.5 3Z" fill="#e0e0e0"/></svg>
<svg style="left:1216px;top:913px" width="13" height="10"><rect width="13" height="10" fill="#e0e0e0"/><circle cx="6.5" cy="5" r="2.8" fill="#535353"/></svg>
<svg style="left:1244px;top:912px" width="15" height="15"><circle cx="5.8" cy="5.8" r="5.2" fill="none" stroke="#e0e0e0" stroke-width="1.2"/><path d="M9.5 2.1A5.2 5.2 0 0 1 2.1 9.5Z" fill="#e0e0e0"/><path d="M9.5 12.5H14L11.75 15Z" fill="#e0e0e0"/></svg>
<svg style="left:1271px;top:912px" width="13" height="11"><path d="M0 0H5L6 1.5H0Z" fill="#e0e0e0"/><rect x="0" y="2" width="13" height="9" fill="#e0e0e0"/></svg>
<svg style="left:1298px;top:912px" width="12" height="12"><rect x="0.6" y="0.6" width="10.8" height="10.8" fill="none" stroke="#e0e0e0" stroke-width="1.2"/><path d="M6 3V9M3 6H9" stroke="#e0e0e0" stroke-width="1.2"/></svg>
<svg style="left:1325px;top:912px" width="12" height="13"><path d="M0 2H12M4 2V0.6H8V2" fill="none" stroke="#e0e0e0" stroke-width="1.2"/><path d="M1.5 3.5H10.5L10 12.4H2Z" fill="none" stroke="#e0e0e0" stroke-width="1.2"/><path d="M4.5 5V11M6 5V11M7.5 5V11" stroke="#e0e0e0" stroke-width="0.9"/></svg>
<div class="a" style="left:1079px;top:64px;width:1px;height:867px;background:#474747"></div>
<div class="a" style="left:1119px;top:76px;width:1px;height:855px;background:#474747"></div>
</body></html>
